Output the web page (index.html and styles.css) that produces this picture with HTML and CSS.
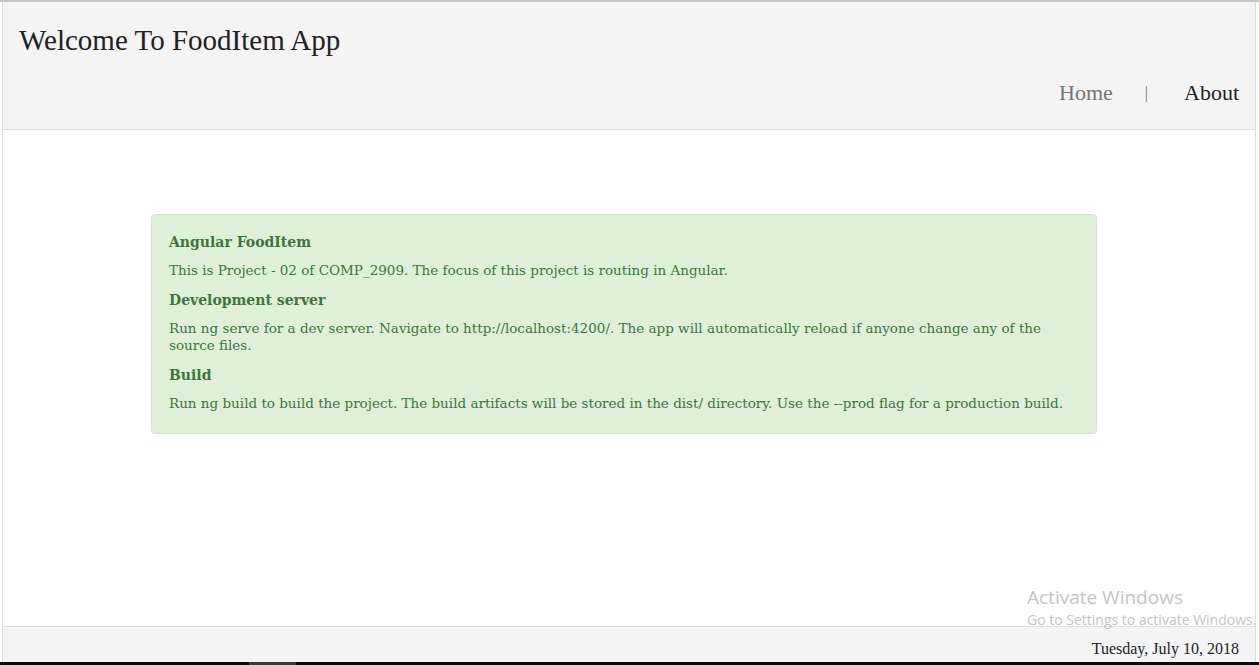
FILE: index.html
```html
<!DOCTYPE html>
<html>
<head>
<meta charset="utf-8">
<title>FoodItem App</title>
<link rel="stylesheet" href="styles.css">
</head>
<body>
<div class="app">
  <header class="header">
    <h1 class="brand">Welcome To FoodItem App</h1>
    <nav class="nav">
      <a class="nav-link home">Home</a>
      <span class="sep">|</span>
      <a class="nav-link about">About</a>
    </nav>
  </header>
  <main class="main">
    <div class="alert">
      <h4 class="alert-title">Angular FoodItem</h4>
      <p class="alert-text">This is Project - 02 of COMP_2909. The focus of this project is routing in Angular.</p>
      <h4 class="alert-title">Development server</h4>
      <p class="alert-text">Run ng serve for a dev server. Navigate to http://localhost:4200/. The app will automatically reload if anyone change any of the source files.</p>
      <h4 class="alert-title">Build</h4>
      <p class="alert-text">Run ng build to build the project. The build artifacts will be stored in the dist/ directory. Use the --prod flag for a production build.</p>
    </div>
  </main>
  <footer class="footer">
    <span class="date">Tuesday, July 10, 2018</span>
  </footer>
</div>
<div class="taskbar"><span class="task-item"></span></div>
<div class="watermark">
  <div class="wm-title">Activate Windows</div>
  <div class="wm-sub">Go to Settings to activate Windows.</div>
</div>
</body>
</html>
```
FILE: styles.css
```css
html, body {
  margin: 0;
  padding: 0;
  height: 100%;
  overflow: hidden;
  background: #fff;
}
body {
  border-top: 2px solid #c6c6c6;
  box-sizing: border-box;
  padding: 0 3px 0 2px;
  display: flex;
  flex-direction: column;
  font-family: "Liberation Serif", "DejaVu Serif", serif;
}
.app {
  flex: 1;
  display: flex;
  flex-direction: column;
  border-left: 1px solid #dcdcdc;
  border-right: 1px solid #dcdcdc;
  min-height: 0;
}
.header {
  background: #f4f4f4;
  border-bottom: 1px solid #dedede;
  height: 128px;
  box-sizing: border-box;
  padding: 22px 16px 0 16px;
  display: flex;
  flex-direction: column;
}
.brand {
  margin: 0;
  font-weight: normal;
  font-size: 29px;
  color: #222;
  line-height: 32px;
}
.nav {
  align-self: flex-end;
  margin-top: 24px;
  display: flex;
  align-items: center;
  font-size: 22px;
}
.nav-link { text-decoration: none; }
.home { color: #777; }
.about { color: #222; }
.sep {
  color: #8a6a8a;
  font-size: 16px;
  margin: 0 36px 0 32px;
}
.main {
  flex: 1;
  padding: 84px 0 0 148px;
}
.alert {
  width: 946px;
  box-sizing: border-box;
  background: #dff0d8;
  border: 1px solid #d0e6c2;
  border-radius: 4px;
  color: #3c763d;
  padding: 15px 17px 21px 17px;
  font-family: "DejaVu Serif", serif;
}
.alert-title {
  margin: 4px 0 12px;
  font-size: 14px;
  font-weight: bold;
}
.alert-text {
  margin: 0 0 13px;
  font-size: 13.5px;
  line-height: 17px;
}
.alert-text:last-child { margin-bottom: 0; }
.footer {
  background: #f4f4f4;
  border-top: 1px solid #dedede;
  height: 36px;
  box-sizing: border-box;
  display: flex;
  justify-content: flex-end;
  align-items: flex-end;
  padding: 0 16px 4px;
}
.date {
  font-size: 16px;
  color: #222;
}
.taskbar {
  height: 3px;
  background: #0c0c0c;
  margin: 0 -3px 0 -2px;
  position: relative;
}
.task-item {
  position: absolute;
  left: 249px;
  width: 47px;
  top: 0;
  height: 3px;
  background: #3a3a3a;
}
.watermark {
  position: absolute;
  left: 1027px;
  top: 584px;
  color: #c4c4c4;
  font-family: "Open Sans", "Noto Sans", sans-serif;
  white-space: nowrap;
}
.wm-title { font-size: 19px; line-height: 26px; }
.wm-sub { font-size: 14px; line-height: 20px; }
```
